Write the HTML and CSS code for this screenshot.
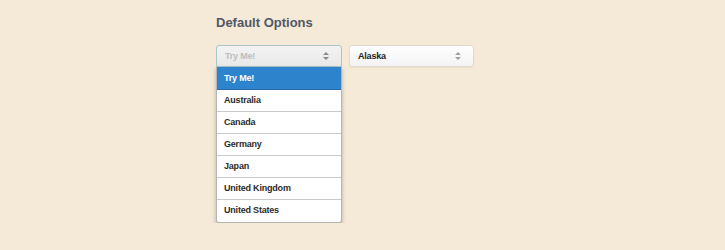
FILE: index.html
```html
<!DOCTYPE html>
<html lang="en">
<head>
    <meta charset="UTF-8">
    <title>Default Options</title>
    <link rel="stylesheet" href="styles.css">
</head>
<body>
    <div class="container">
        <h2>Default Options</h2>
        <div class="selects">
            <div class="select-wrap">
                <div class="select open">
                    <span class="placeholder">Try Me!</span>
                    <svg class="arrows" width="6" height="8" viewBox="0 0 6 8"><path d="M3 0 L6 3 L0 3 Z M0 5 L6 5 L3 8 Z" fill="#8a8a8a"/></svg>
                </div>
                <ul class="options">
                    <li class="active">Try Me!</li>
                    <li>Australia</li>
                    <li>Canada</li>
                    <li>Germany</li>
                    <li>Japan</li>
                    <li>United Kingdom</li>
                    <li>United States</li>
                </ul>
            </div>
            <div class="select-wrap">
                <div class="select">
                    <span>Alaska</span>
                    <svg class="arrows" width="6" height="8" viewBox="0 0 6 8"><path d="M3 0 L6 3 L0 3 Z M0 5 L6 5 L3 8 Z" fill="#a0a0a0"/></svg>
                </div>
            </div>
        </div>
    </div>
</body>
</html>
```

FILE: styles.css
```css
body {
    margin: 0;
    background-color: #f5ead7;
    font-family: "Liberation Sans", Arial, sans-serif;
}
.container {
    padding: 15px 0 0 216px;
}
h2 {
    margin: 0 0 14px;
    font-size: 13px;
    line-height: 16px;
    font-weight: bold;
    color: #525867;
}
.selects {
    display: flex;
    align-items: flex-start;
    gap: 7px;
}
.select-wrap {
    display: flex;
    flex-direction: column;
}
.select {
    width: 125px;
    height: 22px;
    box-sizing: border-box;
    display: flex;
    align-items: center;
    justify-content: space-between;
    padding: 0 12px 0 8px;
    border: 1px solid #e2dacb;
    border-radius: 3px;
    background: linear-gradient(#ffffff, #f3f3f3);
    font-size: 9px;
    letter-spacing: -0.2px;
    font-weight: bold;
    color: #222;
    box-shadow: 0 1px 1px rgba(0, 0, 0, 0.05);
}
.select.open {
    width: 126px;
    border-color: #a9c6c9;
    border-radius: 3px 3px 0 0;
    background: linear-gradient(#f3f3f3, #e8e8e8);
    box-shadow: none;
}
.placeholder {
    color: #bdbdbd;
}
.options {
    width: 126px;
    box-sizing: border-box;
    margin: 0;
    padding: 0;
    list-style: none;
    background: #fff;
    border: 1px solid #b5b5b5;
    border-top: none;
    border-radius: 0 0 3px 3px;
    box-shadow: 0 2px 4px rgba(0, 0, 0, 0.25);
    font-size: 9px;
    letter-spacing: -0.2px;
    font-weight: bold;
    color: #2b2b2b;
}
.options li {
    height: 21px;
    line-height: 21px;
    padding-left: 7px;
    border-bottom: 1px solid #c9c9c9;
}
.options li:last-child {
    border-bottom: none;
    height: 22px;
}
.options li.active {
    height: 22px;
    line-height: 22px;
    background: #2d83cc;
    color: #fff;
    border-bottom-color: #2a6fa8;
}
```
